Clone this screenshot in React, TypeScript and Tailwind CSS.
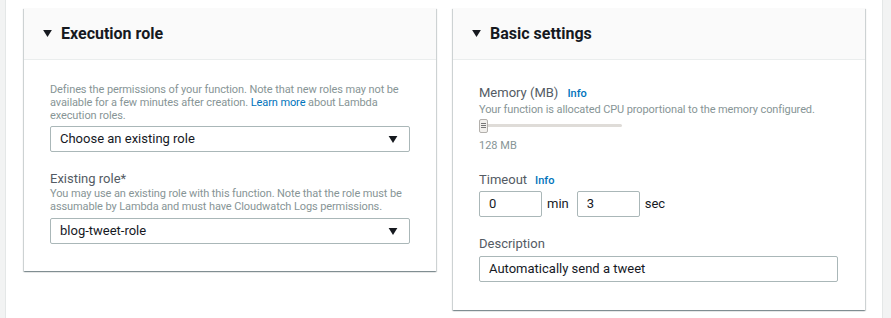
const font = { fontFamily: 'Roboto, "Noto Sans", Arial, sans-serif' };

function Caret({ className }: { className?: string }) {
  return (
    <svg viewBox="0 0 10 8" className={className} fill="#16191f">
      <path d="M0 0h10L5 8z" />
    </svg>
  );
}

function Panel({ title, children }: { title: string; children: React.ReactNode }) {
  return (
    <div className="bg-white shadow-[0_1px_1px_0_rgba(0,28,36,0.3),1px_1px_1px_0_rgba(0,28,36,0.15),-1px_1px_1px_0_rgba(0,28,36,0.15)]">
      <div className="flex h-[52px] items-center gap-[9px] border-b border-[#eaeded] bg-[#fafafa] pl-[19px]">
        <Caret className="h-[7px] w-[9px]" />
        <h2 className="text-[16px] font-bold text-[#16191f]">{title}</h2>
      </div>
      {children}
    </div>
  );
}

function Select({ value }: { value: string }) {
  return (
    <div className="flex h-[26px] items-center justify-between rounded-[2px] border border-[#aab7b8] bg-white pl-[9px] pr-[11px]">
      <span className="text-[13px] text-[#16191f]">{value}</span>
      <Caret className="h-[7px] w-[10px]" />
    </div>
  );
}

export default function App() {
  return (
    <div className="flex h-[318px] w-[891px] bg-white" style={font}>
      <div className="w-[6px] shrink-0 border-r border-[#e4e7e7] bg-[#f2f3f3]" />
      <div className="grid flex-1 grid-cols-[412px_412px] items-start gap-x-[17px] pl-[18px] pt-[8px]">
        <Panel title="Execution role">
          <div className="px-[26px] pb-[27px] pt-[23px]">
            <p className="text-[11px] leading-[13px] tracking-[-0.1px] text-[#879596]">
              Defines the permissions of your function. Note that new roles may not be available for a few minutes after creation. <span className="text-[#0073bb]">Learn more</span> about Lambda execution roles.
            </p>
            <div className="mt-[4px]">
              <Select value="Choose an existing role" />
            </div>
            <div className="mt-[19px] text-[13px] leading-[16px] text-[#545b64]">Existing role*</div>
            <p className="text-[11px] leading-[13px] tracking-[-0.1px] text-[#879596]">
              You may use an existing role with this function. Note that the role must be assumable by Lambda and must have Cloudwatch Logs permissions.
            </p>
            <div className="mt-[5px]">
              <Select value="blog-tweet-role" />
            </div>
          </div>
        </Panel>

        <Panel title="Basic settings">
          <div className="px-[26px] pb-[28px] pt-[25px]">
            <div className="flex items-baseline gap-[9px]">
              <span className="text-[13px] leading-[16px] text-[#545b64]">Memory (MB)</span>
              <a className="text-[11px] font-medium text-[#0073bb]">Info</a>
            </div>
            <p className="text-[11px] leading-[14px] tracking-[-0.1px] text-[#879596]">
              Your function is allocated CPU proportional to the memory configured.
            </p>
            <div className="relative mt-[2px] flex h-[14px] w-[143px] items-center">
              <div className="h-[3px] w-full rounded bg-[#dfdcd8]" />
              <div className="absolute left-0 top-0 flex h-[14px] w-[9px] flex-col items-center justify-center gap-[1px] rounded-[2px] border border-[#b3b0ac] bg-[#f2f0ed]">
                <span className="h-px w-[5px] bg-[#777]" />
                <span className="h-px w-[5px] bg-[#777]" />
                <span className="h-px w-[5px] bg-[#777]" />
              </div>
            </div>
            <div className="mt-[6px] text-[11px] leading-[14px] text-[#879596]">128 MB</div>

            <div className="mt-[19px] flex items-baseline gap-[8px]">
              <span className="text-[13px] leading-[16px] text-[#545b64]">Timeout</span>
              <a className="text-[11px] font-medium text-[#0073bb]">Info</a>
            </div>
            <div className="mt-[2px] flex items-center">
              <div className="flex h-[26px] w-[63px] items-center rounded-[2px] border border-[#aab7b8] pl-[9px] text-[13px] text-[#16191f]">0</div>
              <span className="ml-[5px] mr-[8px] text-[13px] text-[#16191f]">min</span>
              <div className="flex h-[26px] w-[63px] items-center rounded-[2px] border border-[#aab7b8] pl-[9px] text-[13px] text-[#16191f]">3</div>
              <span className="ml-[5px] text-[13px] text-[#16191f]">sec</span>
            </div>

            <div className="mt-[19px] text-[13px] leading-[16px] text-[#545b64]">Description</div>
            <div className="mt-[4px] flex h-[26px] w-[359px] items-center rounded-[2px] border border-[#aab7b8] pl-[9px] text-[13px] text-[#16191f]">
              Automatically send a tweet
            </div>
          </div>
        </Panel>
      </div>
      <div className="w-[9px] shrink-0 border-l border-[#e4e7e7] bg-[#f2f3f3]" />
    </div>
  );
}
